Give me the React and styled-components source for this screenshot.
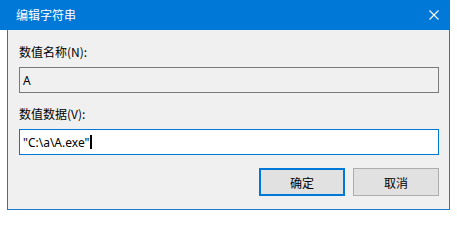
import React from "react";
import styled, { createGlobalStyle } from "styled-components";

const Global = createGlobalStyle`
  html, body { margin: 0; padding: 0; background: #ffffff; }
  body { font-family: "Segoe UI", "Noto Sans", "Noto Sans CJK SC", sans-serif; font-size: 12px; }
`;

const Screen = styled.div`
  width: 457px;
  height: 218px;
  background: #ffffff;
  overflow: hidden;
`;

const TitleBar = styled.div`
  width: 450px;
  height: 30px;
  background: #0078d7;
  display: flex;
  align-items: center;
  justify-content: space-between;
  padding: 0 11px 0 16px;
  box-sizing: border-box;
`;

const Title = styled.span`
  color: #ffffff;
  font-size: 12px;
  font-family: "Noto Sans CJK SC", sans-serif;
  line-height: 16px;
`;

const Close = styled.div`
  width: 10px;
  height: 10px;
  display: flex;
`;

const Body = styled.div`
  margin-left: 7px;
  width: 443px;
  height: 180px;
  box-sizing: border-box;
  background: #f0f0f0;
  border: 1px solid #1979ca;
  border-top: none;
  padding: 14px 10px 0 11px;
  display: flex;
  flex-direction: column;
`;

const Label = styled.div`
  color: #000000;
  font-family: "Noto Sans CJK SC", sans-serif;
  font-size: 12px;
  line-height: 16px;
  margin-bottom: 7px;
`;

const Field = styled.div`
  height: 26px;
  box-sizing: border-box;
  border: 1px solid ${(p) => (p.$active ? "#0078d7" : "#7a7a7a")};
  background: ${(p) => (p.$active ? "#ffffff" : "#f0f0f0")};
  display: flex;
  align-items: center;
  padding-left: 3px;
  font-family: "Segoe UI", "Noto Sans", sans-serif;
  font-size: 12px;
  color: #000000;
  margin-bottom: 13px;
`;

const Caret = styled.span`
  display: inline-block;
  width: 2px;
  height: 14px;
  background: #000000;
  margin-left: 1px;
`;

const Buttons = styled.div`
  display: flex;
  justify-content: flex-end;
  gap: 8px;
`;

const Button = styled.div`
  width: 86px;
  height: 28px;
  box-sizing: border-box;
  background: #e1e1e1;
  border: ${(p) => (p.$primary ? "2px solid #0078d7" : "1px solid #adadad")};
  display: flex;
  align-items: center;
  justify-content: center;
  font-family: "Noto Sans CJK SC", sans-serif;
  font-size: 12px;
  color: #000000;
`;

export default function App() {
  return (
    <Screen>
      <Global />
      <TitleBar>
        <Title>编辑字符串</Title>
        <Close>
          <svg width="10" height="10" viewBox="0 0 10 10">
            <path d="M0.5 0.5 L9.5 9.5 M9.5 0.5 L0.5 9.5" stroke="#ffffff" strokeWidth="1.1" />
          </svg>
        </Close>
      </TitleBar>
      <Body>
        <Label>数值名称(N):</Label>
        <Field>A</Field>
        <Label>数值数据(V):</Label>
        <Field $active>
          "C:\a\A.exe"
          <Caret />
        </Field>
        <Buttons>
          <Button $primary>确定</Button>
          <Button>取消</Button>
        </Buttons>
      </Body>
    </Screen>
  );
}
